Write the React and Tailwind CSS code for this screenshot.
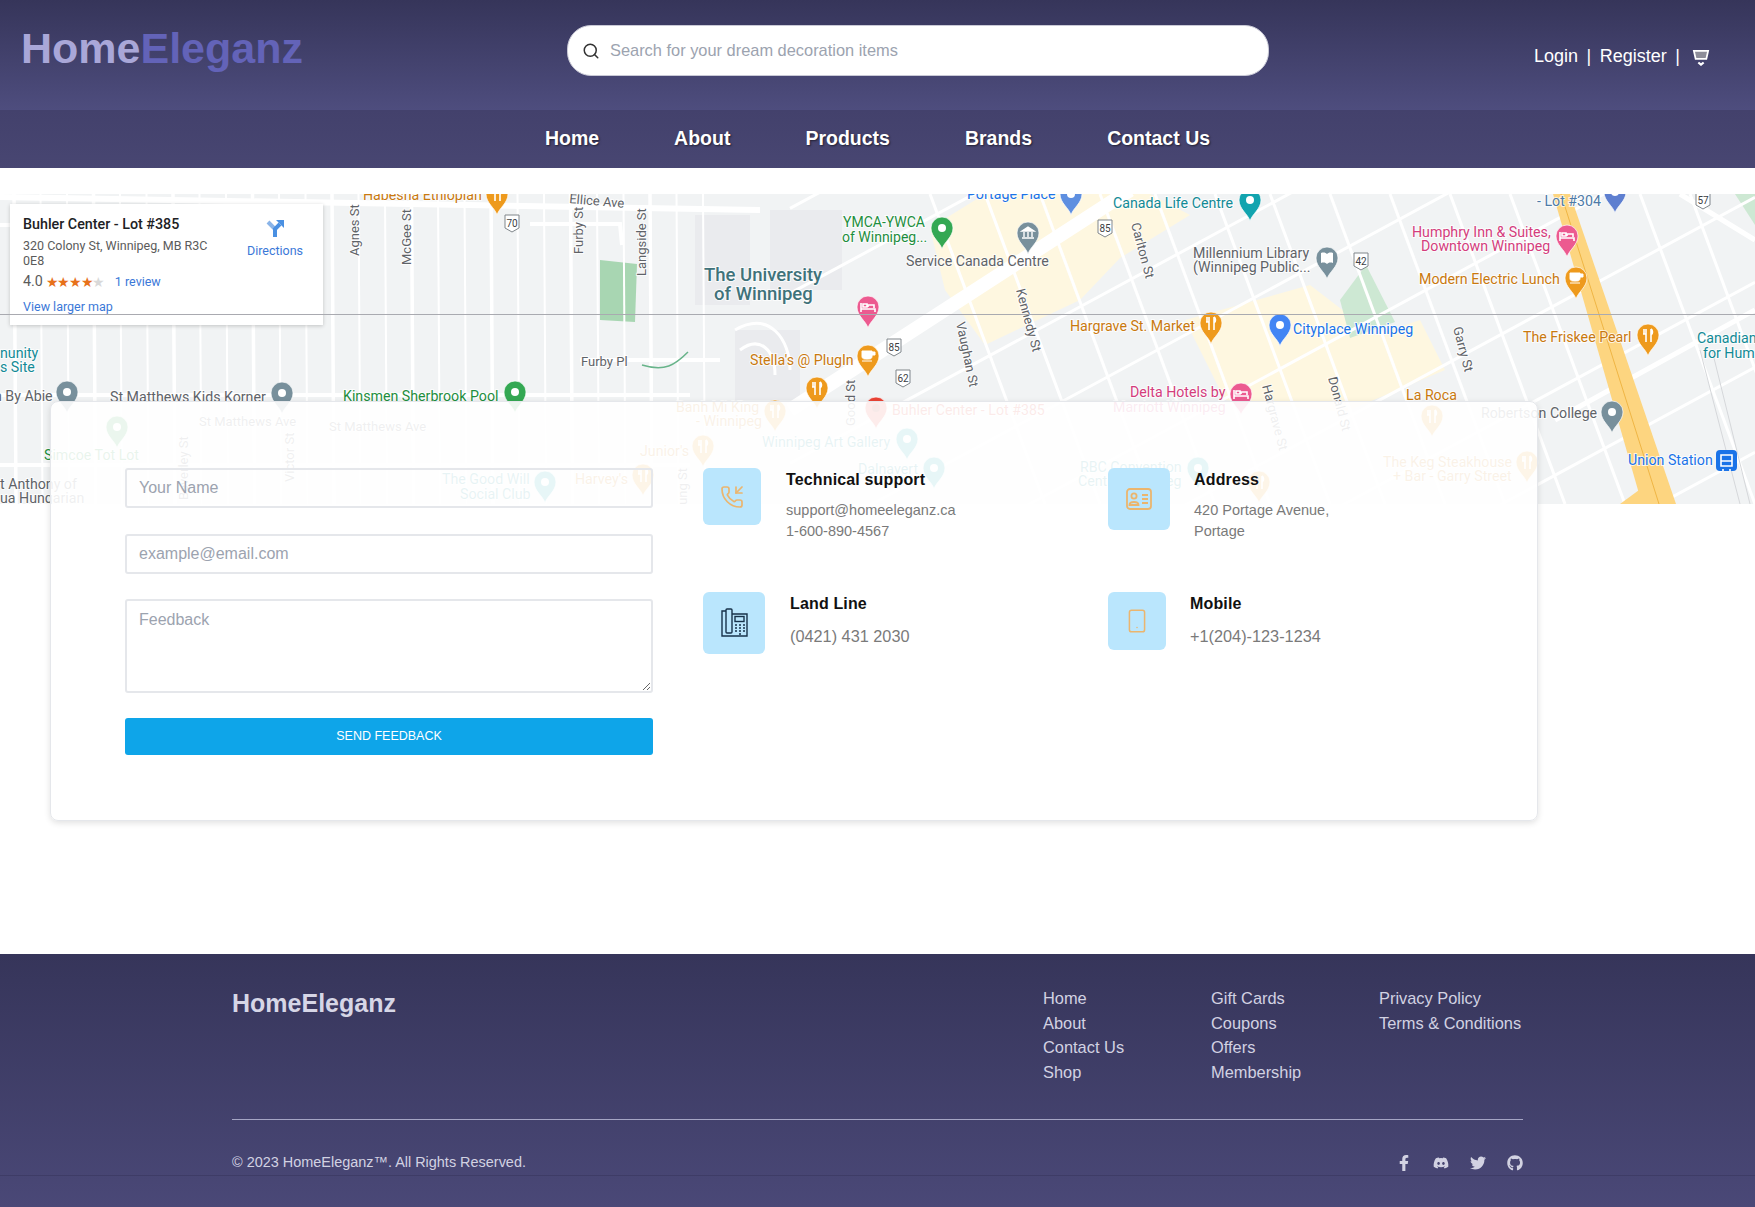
import { Search, PhoneIncoming, Smartphone } from 'lucide-react'
import { FaFacebookF, FaDiscord, FaTwitter, FaGithub } from 'react-icons/fa'

const orange = '#c9790f'
const pinOrange = '#ee9a1d'
const gray = '#5f6368'
const teal = '#128a96'
const pink = '#d43d7c'
const green = '#1e8e3e'
const blue = '#1a73e8'

const labels = [
  { t: 'Habesha Ethiopian', x: 363, y: 200, c: orange },
  { t: 'Ellice Ave', x: 569, y: 203, c: gray, s: 13, r: 5 },
  { t: 'Agnes St', x: 359, y: 256, c: gray, s: 13, r: -90 },
  { t: 'McGee St', x: 411, y: 265, c: gray, s: 13, r: -90 },
  { t: 'Furby St', x: 583, y: 254, c: gray, s: 13, r: -90 },
  { t: 'Langside St', x: 646, y: 276, c: gray, s: 13, r: -90 },
  { t: 'The University', x: 704, y: 281, c: '#3f727a', s: 18.5 },
  { t: 'of Winnipeg', x: 714, y: 300, c: '#3f727a', s: 18.5 },
  { t: 'YMCA-YWCA', x: 843, y: 227, c: green, s: 14 },
  { t: 'of Winnipeg...', x: 842, y: 242, c: green, s: 14 },
  { t: 'Service Canada Centre', x: 906, y: 266, c: gray },
  { t: 'Portage Place', x: 967, y: 199, c: blue },
  { t: 'Canada Life Centre', x: 1113, y: 208, c: teal },
  { t: 'Carlton St', x: 1131, y: 224, c: gray, s: 13, r: 75 },
  { t: 'Millennium Library', x: 1193, y: 258, c: gray },
  { t: '(Winnipeg Public...', x: 1193, y: 272, c: gray },
  { t: '- Lot #304', x: 1537, y: 206, c: '#4e7ba8' },
  { t: 'Humphry Inn & Suites,', x: 1412, y: 237, c: pink },
  { t: 'Downtown Winnipeg', x: 1421, y: 251, c: pink },
  { t: 'Modern Electric Lunch', x: 1419, y: 284, c: orange },
  { t: 'Hargrave St. Market', x: 1070, y: 331, c: orange },
  { t: 'Cityplace Winnipeg', x: 1293, y: 334, c: blue },
  { t: 'The Friskee Pearl', x: 1523, y: 342, c: orange },
  { t: 'Canadian', x: 1697, y: 343, c: teal },
  { t: 'for Hum', x: 1703, y: 358, c: teal },
  { t: 'Kennedy St', x: 1016, y: 290, c: gray, s: 13, r: 75 },
  { t: 'Vaughan St', x: 956, y: 323, c: gray, s: 13, r: 78 },
  { t: 'Garry St', x: 1453, y: 328, c: gray, s: 13, r: 75 },
  { t: 'Donald St', x: 1328, y: 378, c: gray, s: 13, r: 75 },
  { t: 'Hargrave St', x: 1262, y: 386, c: gray, s: 13, r: 75 },
  { t: 'nunity', x: 0, y: 358, c: teal },
  { t: 's Site', x: 0, y: 372, c: teal },
  { t: 'n By Abie', x: -6, y: 401, c: gray },
  { t: 'St Matthews Kids Korner', x: 110, y: 402, c: gray },
  { t: 'Kinsmen Sherbrook Pool', x: 343, y: 401, c: green },
  { t: 'Furby Pl', x: 581, y: 366, c: gray, s: 13 },
  { t: "Stella's @ PlugIn", x: 750, y: 365, c: orange },
  { t: 'Good St', x: 855, y: 426, c: gray, s: 13, r: -90 },
  { t: 'Delta Hotels by', x: 1130, y: 397, c: pink },
  { t: 'Marriott Winnipeg', x: 1113, y: 412, c: pink },
  { t: 'La Roca', x: 1406, y: 400, c: orange },
  { t: 'Robertson College', x: 1481, y: 418, c: gray },
  { t: 'Union Station', x: 1628, y: 465, c: blue },
  { t: 'Buhler Center - Lot #385', x: 892, y: 415, c: '#d93025' },
  { t: 'Banh Mi King', x: 676, y: 412, c: orange },
  { t: '- Winnipeg', x: 696, y: 426, c: orange },
  { t: "Junior's", x: 640, y: 456, c: orange },
  { t: "Harvey's", x: 575, y: 484, c: orange },
  { t: 'Winnipeg Art Gallery', x: 762, y: 447, c: teal },
  { t: 'St Matthews Ave', x: 199, y: 426, c: gray, s: 13 },
  { t: 'St Matthews Ave', x: 329, y: 431, c: gray, s: 13 },
  { t: 'Simcoe Tot Lot', x: 44, y: 460, c: green },
  { t: 'Beverley St', x: 188, y: 500, c: gray, s: 13, r: -90 },
  { t: 'Victor St', x: 294, y: 482, c: gray, s: 13, r: -90 },
  { t: 'The Good Will', x: 442, y: 484, c: teal },
  { t: 'Social Club', x: 460, y: 499, c: teal },
  { t: 't Anthony of', x: 0, y: 489, c: gray },
  { t: 'ua Hungarian', x: 0, y: 503, c: gray },
  { t: 'RBC Convention', x: 1080, y: 472, c: teal },
  { t: 'Centre Winnipeg', x: 1078, y: 486, c: teal },
  { t: 'Dalnavert', x: 858, y: 474, c: teal },
  { t: 'The Keg Steakhouse', x: 1383, y: 467, c: orange },
  { t: '+ Bar - Garry Street', x: 1393, y: 481, c: orange },
  { t: 'Jung St', x: 687, y: 512, c: gray, s: 13, r: -90 },
]

const pins = [
  { x: 497, y: 194, c: pinOrange, g: 'fork' },
  { x: 1071, y: 194, c: '#5e8fe0', g: 'dot' },
  { x: 1250, y: 200, c: '#12a4af', g: 'dot' },
  { x: 1615, y: 192, c: '#5e7fd0', g: 'dot' },
  { x: 942, y: 228, c: '#34a853', g: 'dot' },
  { x: 1028, y: 233, c: '#78909c', g: 'bank' },
  { x: 1327, y: 258, c: '#78909c', g: 'book' },
  { x: 1567, y: 236, c: '#ec5a90', g: 'bed' },
  { x: 1576, y: 278, c: pinOrange, g: 'cup' },
  { x: 868, y: 307, c: '#ec5a90', g: 'bed' },
  { x: 1211, y: 323, c: pinOrange, g: 'fork' },
  { x: 1280, y: 325, c: '#4285f4', g: 'dot' },
  { x: 1648, y: 335, c: pinOrange, g: 'fork' },
  { x: 868, y: 356, c: pinOrange, g: 'cup' },
  { x: 817, y: 388, c: pinOrange, g: 'fork' },
  { x: 67, y: 392, c: '#78909c', g: 'dot' },
  { x: 282, y: 393, c: '#78909c', g: 'dot' },
  { x: 515, y: 392, c: '#34a853', g: 'dot' },
  { x: 876, y: 408, c: '#ea4335', g: 'dark' },
  { x: 1241, y: 394, c: '#ec5a90', g: 'bed' },
  { x: 1612, y: 412, c: '#78909c', g: 'dot' },
  { x: 775, y: 411, c: pinOrange, g: 'fork' },
  { x: 1432, y: 416, c: pinOrange, g: 'fork' },
  { x: 703, y: 446, c: pinOrange, g: 'fork' },
  { x: 643, y: 475, c: pinOrange, g: 'fork' },
  { x: 545, y: 482, c: '#12a4af', g: 'dot' },
  { x: 907, y: 439, c: '#12a4af', g: 'dot' },
  { x: 934, y: 468, c: '#12a4af', g: 'dot' },
  { x: 1198, y: 468, c: '#12a4af', g: 'dot' },
  { x: 1259, y: 482, c: pinOrange, g: 'fork' },
  { x: 1527, y: 462, c: pinOrange, g: 'fork' },
  { x: 117, y: 427, c: '#34a853', g: 'dot' },
]

const shields = [
  { t: '70', x: 512, y: 223 },
  { t: '85', x: 894, y: 347 },
  { t: '62', x: 903, y: 378 },
  { t: '85', x: 1105, y: 228 },
  { t: '42', x: 1361, y: 261 },
  { t: '57', x: 1703, y: 200 },
]

const westStreets = Array.from({ length: 27 }, (_, i) => 14 + i * 26.5)
const diagonals = [635, 720, 890, 975, 1060, 1145, 1230, 1315, 1400, 1485, 1570, 1655]
const crossStreets = [930, 985, 1040, 1100, 1155, 1215, 1270, 1330, 1390, 1450, 1510, 1640, 1690]

function Pin({ x, y, c, g }) {
  return (
    <g transform={`translate(${x} ${y})`}>
      <path d="M0 21C-2 14-11 9-11 0A11 11 0 1 1 11 0C11 9 2 14 0 21Z" fill={c} stroke="#fff" strokeOpacity="0.7" />
      {g === 'dot' && <circle r="4" fill="#fff" />}
      {g === 'dark' && <circle r="4" fill="#a52714" />}
      {g === 'fork' && <path d="M-4-6V-1M-2-6V-1H-5M-2-1V7M3-6V7M3-6C5-5 5-1 3 0" stroke="#fff" strokeWidth="1.6" fill="none" />}
      {g === 'cup' && <path d="M-6-5H4V0C4 3 2 3 0 3H-2C-4 3-6 3-6 0ZM4-4H7V-1H4M-6 5H4" fill="#fff" stroke="#fff" />}
      {g === 'bed' && <path d="M-7-4V5M-7 2H7V5M-5 0V-3H-1V0ZM0 0V-2H6V1" stroke="#fff" strokeWidth="1.6" fill="none" />}
      {g === 'bank' && <path d="M-6-2L0-6L6-2ZM-6 5H6M-4-1V4M0-1V4M4-1V4" stroke="#fff" strokeWidth="1.4" fill="#fff" />}
      {g === 'book' && <path d="M-6-5C-3-6-1-5 0-4C1-5 3-6 6-5V5C3 4 1 5 0 6C-1 5-3 4-6 5Z" fill="#fff" />}
    </g>
  )
}

function MapLayer() {
  return (
    <svg viewBox="0 194 1755 310" className="block w-full h-full font-['Roboto',sans-serif]">
      <rect x="0" y="194" width="1755" height="310" fill="#f1f3f4" />

      {/* campus blocks and parks */}
      <path d="M695 215H750V305H695ZM770 210H842V290H770ZM735 330H800V400H735Z" fill="#eaebee" />
      <path d="M600 260L637 264L635 322L600 320Z" fill="#a8d6b2" />
      <path d="M930 228L985 194H1150L1190 215L1120 258L1080 300L985 345L945 290Z" fill="#fef7e0" />
      <path d="M1185 320L1310 285L1375 335L1420 320L1445 370L1345 412L1225 400Z" fill="#fef7e0" />
      <path d="M1340 300L1366 265L1395 322L1350 338Z" fill="#cde8d3" />
      <path d="M1735 194H1755V225Z" fill="#cde8d3" />

      {/* streets */}
      {westStreets.map((x, i) => (
        <line key={x} x1={x} y1="194" x2={x + 2} y2="504" stroke="#fff" strokeWidth={i % 3 === 0 ? 3.5 : 2} />
      ))}
      <path d="M0 197L760 210" stroke="#fff" strokeWidth="6" fill="none" />
      <path d="M0 395H690M0 465H690M0 225H60M530 224H620L622 245M580 360H720" stroke="#fff" strokeWidth="4" fill="none" />
      <path d="M642 365C665 372 675 365 688 352" stroke="#68b48a" strokeWidth="1.5" fill="none" />
      <path d="M735 330C770 310 790 340 790 370M740 350C760 335 775 350 775 375" stroke="#fff" strokeWidth="3" fill="none" />
      {diagonals.map((c) => (
        <line key={c} x1="790" y1={c - 426.6} x2="1755" y2={c - 947.7} stroke="#fff" strokeWidth="3" />
      ))}
      {crossStreets.map((x) => (
        <line key={x} x1={x} y1="194" x2={x + 115} y2="504" stroke="#fff" strokeWidth="3" />
      ))}
      <path d="M790 410L1130 190" stroke="#fff" strokeWidth="14" fill="none" />
      <path d="M1680 194L1755 240M1555 420L1755 310" stroke="#fff" strokeWidth="5" fill="none" />
      <path d="M1700 350L1740 504M1712 350L1750 504M1555 194L1590 290" stroke="#d5d7da" strokeWidth="1" fill="none" />

      {/* highway */}
      <path d="M1553 194H1570L1676 504H1642Z" fill="#fdd580" />
      <path d="M1620 504L1650 482L1660 504Z" fill="#fdd580" />
      <path d="M1561 194L1659 504" stroke="#efb544" strokeWidth="1" fill="none" />

      {shields.map((s) => (
        <g key={s.t + s.x}>
          <path d={`M${s.x - 7} ${s.y - 8}H${s.x + 7}V${s.y + 5}L${s.x} ${s.y + 9}L${s.x - 7} ${s.y + 5}Z`} fill="#fff" stroke="#80868b" />
          <text x={s.x} y={s.y + 4} textAnchor="middle" fontSize="10" fill="#3c4043">{s.t}</text>
        </g>
      ))}
      {pins.map((p) => <Pin key={`${p.x}-${p.y}`} {...p} />)}
      <rect x="1716" y="450" width="21" height="21" rx="4" fill="#1a73e8" />
      <path d="M1721 455H1732V466H1721ZM1721 461H1732M1723 469V471M1730 469V471" stroke="#fff" strokeWidth="1.6" fill="none" />

      {labels.map((l) => (
        <text
          key={`${l.t}-${l.x}`}
          x={l.x}
          y={l.y}
          fill={l.c}
          fontSize={l.s || 14.2}
          fontWeight={l.s === 18.5 ? 500 : 400}
          stroke="#fff"
          strokeWidth="2"
          strokeOpacity="0.75"
          paintOrder="stroke"
          transform={l.r ? `rotate(${l.r} ${l.x} ${l.y})` : undefined}
        >
          {l.t}
        </text>
      ))}
    </svg>
  )
}

function InfoWindow() {
  return (
    <div className="absolute left-[10px] top-[10px] w-[313px] h-[121px] bg-white shadow-[0_1px_4px_rgba(0,0,0,0.2)] pl-[13px] pt-[11px] font-['Roboto',sans-serif] text-[12.5px]">
      <div className="flex">
        <div className="w-[196px]">
          <div className="text-[14.3px] font-medium leading-[18px] text-[#202124]">Buhler Center - Lot #385</div>
          <div className="mt-[6px] leading-[14.5px] text-[#5b5b5b]">320 Colony St, Winnipeg, MB R3C 0E8</div>
        </div>
        <div className="ml-[28px] flex flex-col items-center w-[56px] pt-[4px]">
          <svg viewBox="0 0 20 20" className="-ml-[1px] w-5 h-5">
            <path d="M3 3L10 10V18" stroke="#8ab4e8" strokeWidth="4" fill="none" />
            <path d="M10 18V10L15 5" stroke="#4a90e2" strokeWidth="4" fill="none" />
            <path d="M11 1H19V9Z" fill="#4a90e2" />
          </svg>
          <div className="mt-[3px] text-[#3b78d8] whitespace-nowrap">Directions</div>
        </div>
      </div>
      <div className="mt-[5px] flex items-center h-[18px]">
        <span className="text-[14.3px] text-[#5b5b5b]">4.0</span>
        <span className="ml-[3px] w-[57px] text-[14px] tracking-[-1.4px] text-[#e7711b]">★★★★<span className="text-[#d9d9d9]">★</span></span>
        <span className="ml-[12px] text-[#3b78d8]">1 review</span>
      </div>
      <div className="mt-[7px] text-[#3b78d8]">View larger map</div>
    </div>
  )
}

function IdCardIcon() {
  return (
    <svg viewBox="0 0 26 22" fill="none" stroke="#ebb56e" strokeWidth="1.8" className="w-[26px] h-[22px]">
      <rect x="1" y="1" width="24" height="20" rx="3" />
      <circle cx="8" cy="8" r="2.6" />
      <path d="M3.5 17C3.5 13 12.5 13 12.5 17Z" />
      <path d="M16 7H22M16 11H22M16 15H22" />
    </svg>
  )
}

function DeskPhoneIcon() {
  return (
    <svg viewBox="0 0 28 30" fill="none" stroke="#17324a" strokeWidth="1.4" className="w-[28px] h-[30px]">
      <path d="M6 3H2V28H27V6H12" />
      <rect x="6" y="1" width="6" height="24" rx="1" />
      <rect x="15" y="8.5" width="9" height="5" />
      <path d="M15 17H17M19 17H21M23 17H25M15 20H17M19 20H21M23 20H25M15 23H17M19 23H21M23 23H25M19 26H21" strokeWidth="1.3" />
    </svg>
  )
}

function ContactItem({ icon, boxClass, title, textClass, lines, bodyClass }) {
  return (
    <div className="flex items-start">
      <div className={`flex items-center justify-center rounded-md bg-[#bae6fd] shrink-0 ${boxClass}`}>{icon}</div>
      <div className={textClass}>
        <div className="text-base font-bold leading-[24px] tracking-[0.15px] text-[#111]">{title}</div>
        <div className={bodyClass}>
          {lines.map((l) => <div key={l}>{l}</div>)}
        </div>
      </div>
    </div>
  )
}

export default function App() {
  return (
    <div className="min-h-[1207px] bg-white font-['Liberation_Sans',Arial,sans-serif]">
      <header className="flex h-[110px] bg-gradient-to-b from-[#36355a] to-[#4e4d7e] pl-[21px]">
        <div className="w-[546px] pt-[23px] text-[43px] font-bold leading-[50px] text-[#a9a7d8]">
          Home<span className="text-[#6363b8]">Eleganz</span>
        </div>
        <div className="mt-[25px] flex h-[51px] w-[702px] items-center rounded-[24px] border border-[#c9c9d6] bg-white pl-[14px]">
          <Search className="h-[18px] w-[18px] text-[#333]" strokeWidth={2} />
          <input
            className="ml-[10px] flex-1 bg-transparent text-[16.4px] text-[#333] outline-none placeholder:text-[#9ca3af]"
            placeholder="Search for your dream decoration items"
          />
        </div>
        <div className="ml-[265px] mt-[43px] flex h-[26px] items-center text-[18px] text-white">
          <span>Login</span>
          <span className="mx-[8.5px]">|</span>
          <span>Register</span>
          <span className="mx-[8.5px]">|</span>
          <svg viewBox="0 0 20 18" className="ml-[4px] mt-[4px] h-[16px] w-[18px]">
            <path d="M2 1H18L16 10H4Z" fill="#8d8d99" stroke="#fff" strokeWidth="2" />
            <path d="M7 14L10 16.5L13 14" fill="none" stroke="#fff" strokeWidth="2.4" />
          </svg>
        </div>
      </header>

      <nav className="flex h-[58px] items-center justify-center gap-[75px] bg-gradient-to-b from-[#43416c] to-[#484672] text-[19.5px] font-bold text-white [text-shadow:1px_1px_2px_rgba(0,0,0,0.55)]">
        <span>Home</span>
        <span>About</span>
        <span>Products</span>
        <span>Brands</span>
        <span>Contact Us</span>
      </nav>

      <section className="relative mt-[26px] h-[310px] overflow-hidden">
        <MapLayer />
        <InfoWindow />
        <div className="absolute inset-x-0 top-[120px] h-px bg-[#a9aab0]" />
      </section>

      <main className="relative ml-[50px] -mt-[103px] mb-[133px] flex h-[420px] w-[1488px] rounded-lg border border-[#e5e7eb] bg-white/90 pl-[74px] pt-[66px] shadow-[0_2px_6px_rgba(0,0,0,0.12)]">
        <form className="w-[528px]">
          <input
            className="block h-[40px] w-full rounded-[3px] border-2 border-[#e5e7eb] bg-transparent px-[12px] text-base outline-none placeholder:text-[#9ca3af]"
            placeholder="Your Name"
          />
          <input
            className="mt-[26px] block h-[40px] w-full rounded-[3px] border-2 border-[#e5e7eb] bg-white px-[12px] text-base outline-none placeholder:text-[#9ca3af]"
            placeholder="example@email.com"
          />
          <textarea
            className="mt-[25px] block h-[94px] w-full rounded-[3px] border-2 border-[#e5e7eb] bg-white px-[12px] py-[7px] text-base outline-none placeholder:text-[#9ca3af]"
            placeholder="Feedback"
          />
          <button type="button" className="mt-[25px] block h-[37px] w-full rounded-[3px] bg-[#0ea5e9] text-[12.5px] text-white">
            SEND FEEDBACK
          </button>
        </form>

        <div className="ml-[50px] grid h-fit w-[740px] grid-cols-[405px_1fr] grid-rows-[124px_auto]">
          <ContactItem
            icon={<PhoneIncoming className="h-[24px] w-[24px] text-[#ebb56e]" strokeWidth={1.7} />}
            boxClass="h-[57px] w-[58px]"
            textClass="ml-[25px]"
            title="Technical support"
            bodyClass="mt-[8px] text-[14.5px] leading-[21.3px] text-[#7a7a7a]"
            lines={['support@homeeleganz.ca', '1-600-890-4567']}
          />
          <ContactItem
            icon={<IdCardIcon />}
            boxClass="h-[62px] w-[62px]"
            textClass="ml-[24px]"
            title="Address"
            bodyClass="mt-[8px] text-[14.5px] leading-[21.3px] text-[#7a7a7a]"
            lines={['420 Portage Avenue,', 'Portage']}
          />
          <ContactItem
            icon={<DeskPhoneIcon />}
            boxClass="h-[62px] w-[62px]"
            textClass="ml-[25px]"
            title="Land Line"
            bodyClass="mt-[8px] text-[16.3px] leading-[24px] text-[#7a7a7a]"
            lines={['(0421) 431 2030']}
          />
          <ContactItem
            icon={<Smartphone className="h-[26px] w-[26px] text-[#ebb56e]" strokeWidth={1.4} />}
            boxClass="h-[58px] w-[58px]"
            textClass="ml-[24px]"
            title="Mobile"
            bodyClass="mt-[8px] text-[16.3px] leading-[24px] text-[#7a7a7a]"
            lines={['+1(204)-123-1234']}
          />
        </div>
      </main>

      <footer className="h-[253px] bg-gradient-to-b from-[#36355a] to-[#4a4877]">
        <div className="mx-[232px] border-b border-[#a5a5c4] h-[166px] flex pt-[32px]">
          <div className="mt-[1px] text-[25px] font-bold leading-[32px] text-[#d6d6e6]">HomeEleganz</div>
          <div className="ml-auto flex text-[16.4px] leading-[24.7px] text-[#d2d2e2]">
            <div className="w-[168px]">
              <div>Home</div>
              <div>About</div>
              <div>Contact Us</div>
              <div>Shop</div>
            </div>
            <div className="w-[168px]">
              <div>Gift Cards</div>
              <div>Coupons</div>
              <div>Offers</div>
              <div>Membership</div>
            </div>
            <div className="w-[144px] whitespace-nowrap">
              <div>Privacy Policy</div>
              <div>Terms &amp; Conditions</div>
            </div>
          </div>
        </div>
        <div className="border-b border-[#3e3c66]">
          <div className="mx-[232px] flex h-[55px] items-end pb-[1px] text-[14.45px] text-[#d2d2e2]">
            <span>© 2023 HomeEleganz™. All Rights Reserved.</span>
            <div className="ml-auto flex items-center gap-[21px] pb-[3px] text-[16px]">
              <FaFacebookF />
              <FaDiscord />
              <FaTwitter />
              <FaGithub />
            </div>
          </div>
        </div>
      </footer>
    </div>
  )
}
